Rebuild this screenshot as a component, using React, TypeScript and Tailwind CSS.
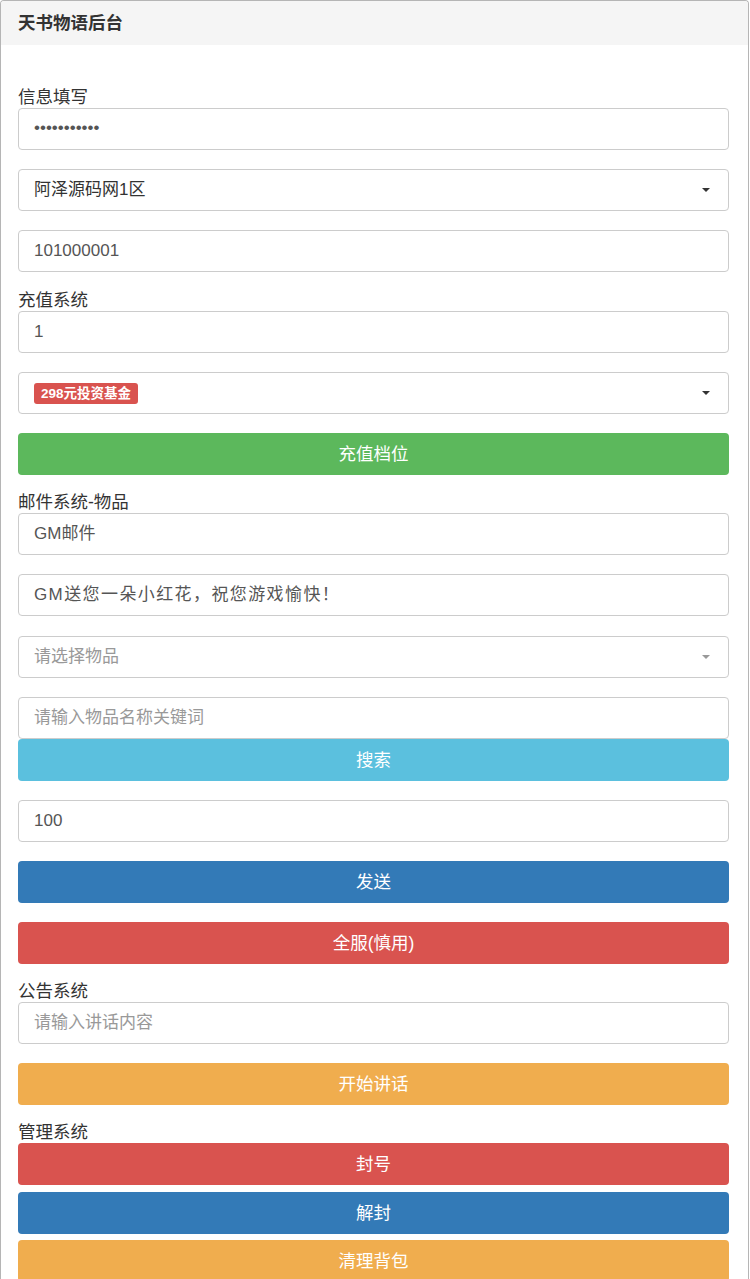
import React from "react";

const font = { fontFamily: '"Liberation Sans", "Noto Sans CJK SC", sans-serif' };

function Caret({ gray }: { gray?: boolean }) {
  return (
    <svg width="10" height="6" viewBox="0 0 10 6" className="absolute right-[17px] top-1/2 -translate-y-1/2">
      <polygon points="1,1 9,1 5,5" fill={gray ? "#999" : "#333"} />
    </svg>
  );
}

function Input({ value, placeholder, className = "" }: { value?: string; placeholder?: string; className?: string }) {
  return (
    <div
      className={`h-[42px] w-full rounded-[4px] border border-[#ccc] bg-white pl-[15px] flex items-center text-[17px] ${
        value ? "text-[#555]" : "text-[#999]"
      } ${className}`}
    >
      {value ?? placeholder}
    </div>
  );
}

function Select({ children, gray, className = "" }: { children: React.ReactNode; gray?: boolean; className?: string }) {
  return (
    <div
      className={`relative h-[42px] w-full rounded-[4px] border border-[#ccc] bg-white pl-[15px] flex items-center text-[17px] ${
        gray ? "text-[#999]" : "text-[#333]"
      } ${className}`}
    >
      {children}
      <Caret gray={gray} />
    </div>
  );
}

function Btn({ children, color, className = "" }: { children: React.ReactNode; color: string; className?: string }) {
  return (
    <div
      className={`h-[42px] w-full rounded-[4px] flex items-center justify-center text-white text-[17.5px] ${color} ${className}`}
    >
      {children}
    </div>
  );
}

function Label({ children, className = "" }: { children: React.ReactNode; className?: string }) {
  return <div className={`h-[22px] leading-[22px] text-[17.5px] text-[#333] ${className}`}>{children}</div>;
}

export default function App() {
  return (
    <div style={font} className="w-[750px] bg-white">
      <div className="w-[749px] min-h-[1279px] border-t border-r border-l border-[#b5b5b5] rounded-tl-[4px] rounded-tr-[4px]">
        <div className="h-[44px] bg-[#f5f5f5] flex items-center pl-[17px] rounded-tl-[3px] rounded-tr-[3px]">
          <span className="text-[17.5px] font-bold text-[#333]">天书物语后台</span>
        </div>
        <div className="pl-[17px] pr-[19px] flex flex-col">
          <Label className="mt-[41px]">信息填写</Label>
          <Input value="•••••••••••" className="text-[17px] pb-[2px]" />
          <Select className="mt-[19px]">阿泽源码网1区</Select>
          <Input value="101000001" className="mt-[19px]" />
          <Label className="mt-[17px]">充值系统</Label>
          <Input value="1" />
          <Select className="mt-[19px]">
            <span className="rounded-[3px] bg-[#d9534f] px-[7px] h-[21px] leading-[21px] text-white text-[13.5px] font-bold">
              298元投资基金
            </span>
          </Select>
          <Btn color="bg-[#5cb85c]" className="mt-[19px]">充值档位</Btn>
          <Label className="mt-[16px]">邮件系统-物品</Label>
          <Input value="GM邮件" />
          <Input value="GM送您一朵小红花，祝您游戏愉快！" className="mt-[19px] tracking-[1.4px]" />
          <Select gray className="mt-[20px]">请选择物品</Select>
          <Input placeholder="请输入物品名称关键词" className="mt-[19px]" />
          <Btn color="bg-[#5bc0de]">搜索</Btn>
          <Input value="100" className="mt-[19px]" />
          <Btn color="bg-[#337ab7]" className="mt-[19px]">发送</Btn>
          <Btn color="bg-[#d9534f]" className="mt-[19px]">全服(慎用)</Btn>
          <Label className="mt-[16px]">公告系统</Label>
          <Input placeholder="请输入讲话内容" />
          <Btn color="bg-[#f0ad4e]" className="mt-[19px]">开始讲话</Btn>
          <Label className="mt-[16px]">管理系统</Label>
          <Btn color="bg-[#d9534f]">封号</Btn>
          <Btn color="bg-[#337ab7]" className="mt-[7px]">解封</Btn>
          <Btn color="bg-[#f0ad4e]" className="mt-[6px]">清理背包</Btn>
        </div>
      </div>
    </div>
  );
}
